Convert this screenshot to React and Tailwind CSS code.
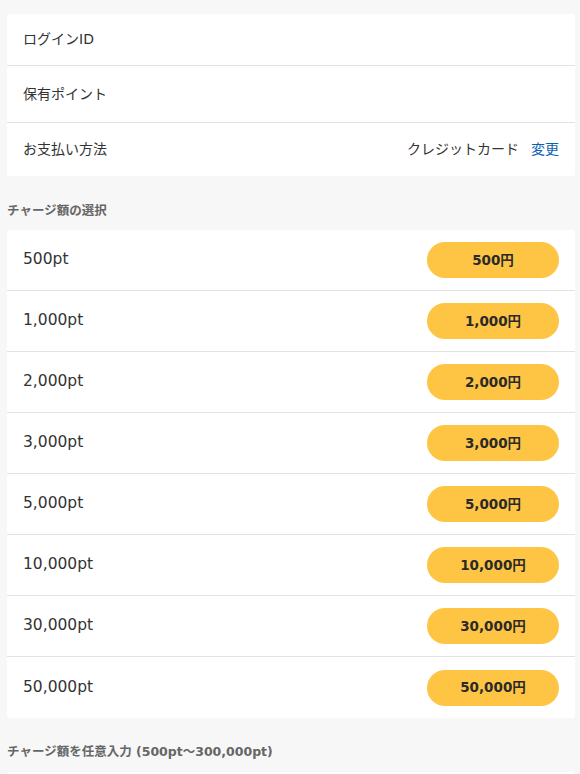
import React from 'react';

const font = { fontFamily: '"DejaVu Sans", "Noto Sans CJK JP", sans-serif' };

const amounts = [
  ['500pt', '500円'],
  ['1,000pt', '1,000円'],
  ['2,000pt', '2,000円'],
  ['3,000pt', '3,000円'],
  ['5,000pt', '5,000円'],
  ['10,000pt', '10,000円'],
  ['30,000pt', '30,000円'],
  ['50,000pt', '50,000円'],
];

const App = () => {
  return (
    <div className="min-h-[774px] bg-[#f7f7f7] pt-[14px] pl-[7px] pr-[5px] text-[#333]" style={font}>
      <div className="bg-white rounded-[3px]">
        <div className="flex items-center h-[52px] px-4 border-b border-[#e2e2e2] text-[14px]">ログインID</div>
        <div className="flex items-center h-[57px] px-4 border-b border-[#e2e2e2] text-[14px]">保有ポイント</div>
        <div className="flex items-center justify-between h-[53px] px-4 text-[14px]">
          <span>お支払い方法</span>
          <span className="flex items-center">
            <span>クレジットカード</span>
            <a className="ml-3 text-[#0b5fb4] cursor-pointer">変更</a>
          </span>
        </div>
      </div>

      <h3 className="mt-[25px] mb-[9px] text-[12.5px] font-bold text-[#666] leading-[20px]">チャージ額の選択</h3>

      <div className="bg-white rounded-[3px]">
        {amounts.map(([pt, yen], i) => (
          <div
            key={pt}
            className={`flex items-center justify-between h-[61px] pl-4 pr-4 ${i < amounts.length - 1 ? 'border-b border-[#e2e2e2]' : 'h-[60px]'}`}
          >
            <span className="text-[15.5px]">{pt}</span>
            <button className="w-[132px] h-[36px] rounded-full bg-[#fec544] text-[13.5px] font-bold text-[#2a2a2a]">{yen}</button>
          </div>
        ))}
      </div>

      <h3 className="mt-[24px] mb-[10px] text-[12.5px] font-bold text-[#666] leading-[20px]">チャージ額を任意入力 (500pt～300,000pt)</h3>
      <div className="bg-white rounded-[3px] h-[60px]"></div>
    </div>
  );
};

export default App;
